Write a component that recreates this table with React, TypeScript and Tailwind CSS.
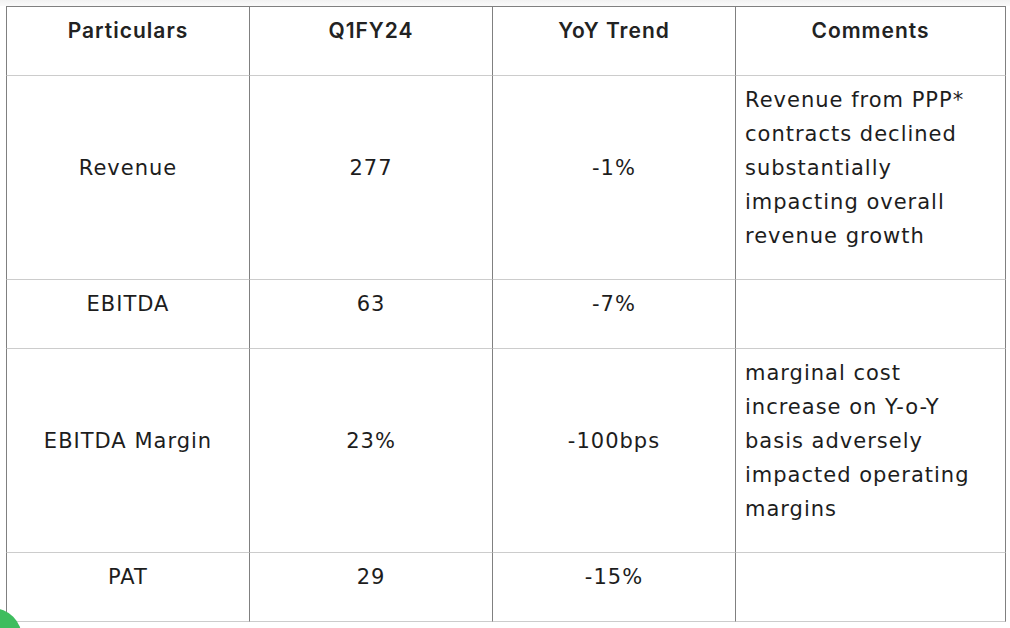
import React from 'react';

interface Row {
  label: string;
  value: string;
  trend: string;
  comment: string[];
  tall: boolean;
}

const rows: Row[] = [
  {
    label: 'Revenue',
    value: '277',
    trend: '-1%',
    comment: ['Revenue from PPP*', 'contracts declined', 'substantially', 'impacting overall', 'revenue growth'],
    tall: true,
  },
  { label: 'EBITDA', value: '63', trend: '-7%', comment: [], tall: false },
  {
    label: 'EBITDA Margin',
    value: '23%',
    trend: '-100bps',
    comment: ['marginal cost', 'increase on Y-o-Y', 'basis adversely', 'impacted operating', 'margins'],
    tall: true,
  },
  { label: 'PAT', value: '29', trend: '-15%', comment: [], tall: false },
];

const cell = 'border-b border-b-[#cccccc] border-r border-r-[#808080] align-middle px-[9px]';

export default function App() {
  return (
    <div className="min-h-[628px] bg-white text-[#1d1d1d] font-['DejaVu_Sans',sans-serif] text-[21px] leading-[34px] tracking-[1px]">
      <div className="h-[6px] bg-gradient-to-b from-[#f2f2f2] to-[#fafafa]" />
      <table className="ml-[6px] w-[1000px] table-fixed border-separate border-spacing-0">
        <colgroup>
          <col className="w-[244px]" />
          <col className="w-[243px]" />
          <col className="w-[243px]" />
          <col className="w-[270px]" />
        </colgroup>
        <thead>
          <tr className="h-[70px]">
            {['Particulars', 'Q1FY24', 'YoY Trend', 'Comments'].map((h, i) => (
              <th
                key={h}
                className={`${cell} border-t border-t-[#808080] text-center font-['Inter',sans-serif] font-semibold tracking-[1px] text-[#222] ${i === 0 ? 'border-l border-l-[#808080]' : ''}`}
              >
                <p className="mb-5">{h}</p>
              </th>
            ))}
          </tr>
        </thead>
        <tbody>
          {rows.map(r => (
            <tr key={r.label} className={r.tall ? 'h-[204px]' : 'h-[69px]'}>
              <td className={`${cell} border-l border-l-[#808080] text-center`}>
                <p className="mb-5">{r.label}</p>
              </td>
              <td className={`${cell} text-center`}>
                <p className="mb-5">{r.value}</p>
              </td>
              <td className={`${cell} text-center`}>
                <p className="mb-5">{r.trend}</p>
              </td>
              <td className={`${cell} text-left`}>
                {r.comment.length > 0 && (
                  <p className="mb-5">
                    {r.comment.map((line, i) => (
                      <React.Fragment key={i}>
                        {line}
                        {i < r.comment.length - 1 && <br />}
                      </React.Fragment>
                    ))}
                  </p>
                )}
              </td>
            </tr>
          ))}
        </tbody>
      </table>
      <div className="fixed left-[-38px] bottom-[-40px] w-[60px] h-[60px] rounded-full bg-[#3ebd5e]" />
    </div>
  );
}
